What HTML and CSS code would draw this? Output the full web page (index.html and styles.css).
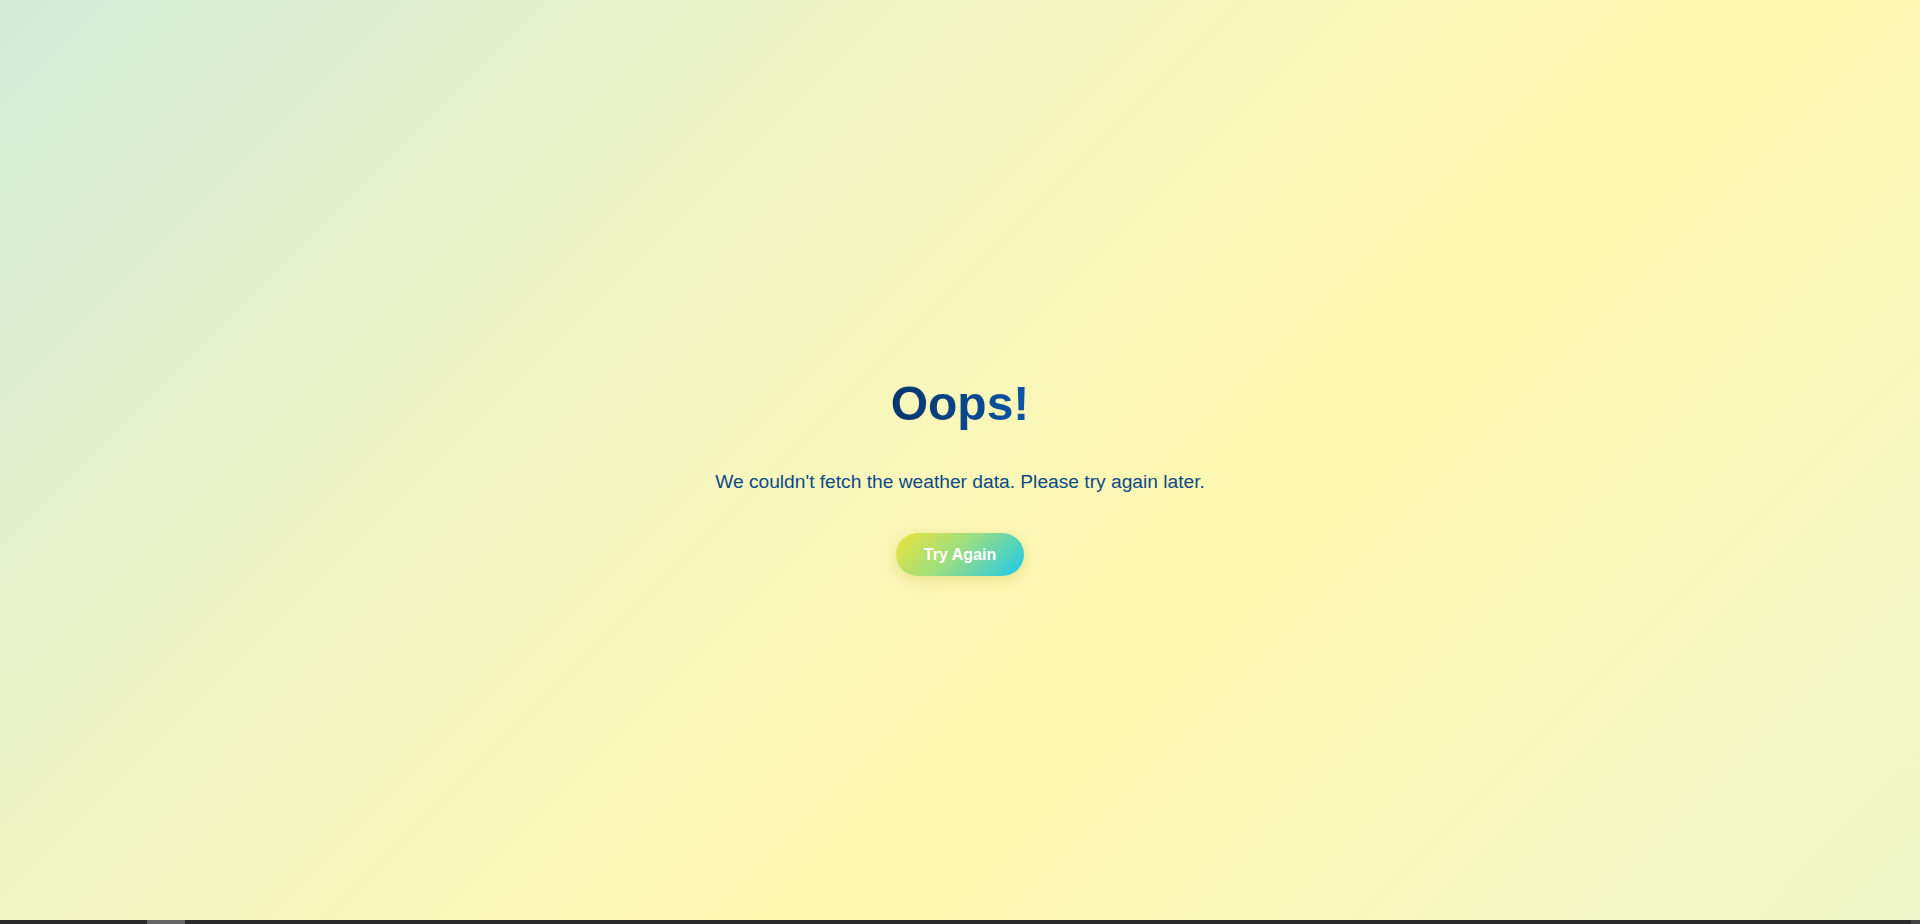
FILE: index.html
```html
<!DOCTYPE html>
<html lang="en">
<head>
<meta charset="utf-8">
<title>Weather - Error</title>
<link rel="stylesheet" href="styles.css">
</head>
<body>
<main class="page">
  <section class="error">
    <h1 class="error-title">Oops!</h1>
    <p class="error-text">We couldn't fetch the weather data. Please try again later.</p>
    <button class="retry-btn" type="button">Try Again</button>
  </section>
</main>
<div class="hscroll"><div class="hscroll-thumb"></div><div class="hscroll-corner"></div></div>
</body>
</html>
```

FILE: styles.css
```css
* { box-sizing: border-box; }
html, body { margin: 0; padding: 0; }
body {
  height: 924px;
  overflow: hidden;
  font-family: "Liberation Sans", Arial, sans-serif;
  background: linear-gradient(135deg, #d4ebda 0%, #f2f5c2 35%, #fff8b0 62%, #eef6cb 100%);
}
.page {
  height: 920px;
  padding-top: 32px;
  display: flex;
  align-items: center;
  justify-content: center;
}
.error {
  display: flex;
  flex-direction: column;
  align-items: center;
  text-align: center;
}
.error-title {
  margin: 0 0 40px;
  font-size: 48px;
  font-weight: 700;
  line-height: 55px;
  background: linear-gradient(90deg, #08346c, #0b56a6);
  -webkit-background-clip: text;
  background-clip: text;
  color: transparent;
}
.error-text {
  margin: 0 0 40px;
  font-size: 19.2px;
  line-height: 22px;
  color: #0c4a8a;
}
.retry-btn {
  border: none;
  border-radius: 999px;
  padding: 12px 28px;
  font-family: inherit;
  font-size: 16px;
  font-weight: 700;
  line-height: 19px;
  color: #fff;
  background: linear-gradient(135deg, #ece33a 0%, #9fdf7e 45%, #1bc8ee 100%);
  box-shadow: 0 4px 14px rgba(200, 190, 60, 0.35);
  cursor: pointer;
}
.hscroll {
  position: fixed;
  left: 0;
  bottom: 0;
  width: 100%;
  height: 4px;
  background: #2a2a2a;
}
.hscroll-thumb {
  position: absolute;
  left: 147px;
  top: 0;
  width: 38px;
  height: 4px;
  background: #666;
}
.hscroll-corner {
  position: absolute;
  right: 0;
  top: 0;
  width: 9px;
  height: 4px;
  background: #444;
}
```
